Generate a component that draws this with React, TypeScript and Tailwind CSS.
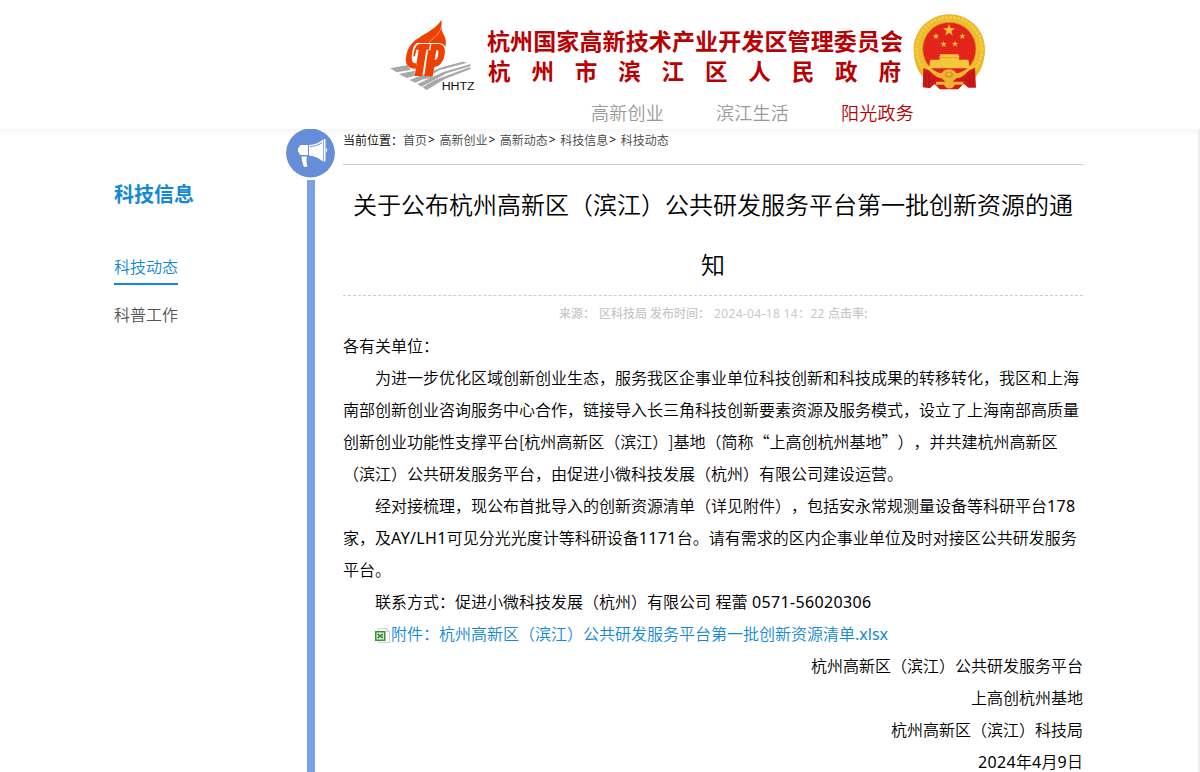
import React from 'react';

const BREADCRUMBS = ['首页', '高新创业', '高新动态', '科技信息', '科技动态'];

const NAV_ITEMS = [
  { label: '高新创业', active: false },
  { label: '滨江生活', active: false },
  { label: '阳光政务', active: true },
];

const DISTRICT_NAME = '杭州市滨江区人民政府';

const STAR = 'M0,-10 L2.4,-3.2 L9.5,-3.1 L3.8,1.2 L5.9,8.1 L0,4 L-5.9,8.1 L-3.8,1.2 L-9.5,-3.1 L-2.4,-3.2 Z';

// Latin letters and digits inside Chinese copy
function Latin({ children }: { children: React.ReactNode }) {
  return <span className="font-['Noto_Sans','Noto_Sans_CJK_SC',sans-serif] font-normal tracking-[0.35px]">{children}</span>;
}

function FlameLogo() {
  return (
    <svg viewBox="0 0 300 270" className="w-[100px] h-[90px] shrink-0">
      <g fill="#a8a8a8">
        <path d="M30 175 L84 165 L92 180 L50 187 Z" />
        <path d="M56 192 L104 182 L104 197 L80 204 Z" />
        <path d="M88 210 L190 170 L248 155 L262 158 L180 180 L158 192 L158 203 L130 208 L106 218 Z" />
        <path d="M112 222 L190 186 L272 162 L270 169 L200 190 L125 230 Z" />
        <path d="M128 232 L165 210 L268 172 L274 176 L196 206 L140 240 Z" />
      </g>
      <path
        fill="#ee4000"
        d="M184 29 C186 46 183 58 189 70 C198 86 199 96 196 112 C193 103 187 100 178 99 L112 99 C102 102 98 117 96 133 C94 148 96 158 104 160 L110 160 L107 176 C85 177 75 164 78 142 C82 115 94 97 115 85 C134 69 170 57 184 29 Z"
      />
      <path fill="#ee4000" d="M117 102 L150 102 L147 119 L139 119 L127 198 L104 198 L116 119 L109 119 L105 139 L100 139 C102 120 107 106 117 102 Z" />
      <path
        fill="#ee4000"
        fillRule="evenodd"
        d="M154 102 L178 102 C192 104 197 116 194 132 C191 153 181 169 163 171 L158 199 L133 199 L144 121 L151 121 Z M169 120 L164 150 C171 149 174 142 175 131 C176 123 174 120 169 120 Z"
      />
      <path d="M185 47 C182 69 164 80 147 97" fill="none" stroke="#fff" strokeWidth="1.5" />
      <text x="185" y="239" fontSize="35" fill="#111" textLength="99" lengthAdjust="spacingAndGlyphs" fontFamily="Liberation Sans, sans-serif">HHTZ</text>
    </svg>
  );
}

function Emblem() {
  return (
    <svg viewBox="30 0 240 285" className="w-20 h-[95px] shrink-0">
      <path
        fill="#e9b52c"
        d="M148 28 C207 28 255 74 255 133 C255 169 242 202 222 222 L205 238 L92 238 L75 222 C53 202 41 171 41 133 C41 74 90 28 148 28 Z"
      />
      <ellipse cx="148" cy="133" rx="98" ry="96" fill="none" stroke="#f4cb3e" strokeWidth="10" strokeDasharray="9 3" />
      <ellipse cx="148" cy="133" rx="86" ry="85" fill="none" stroke="#f0c033" strokeWidth="10" strokeDasharray="6 2" />
      <ellipse cx="148" cy="132" rx="80" ry="80" fill="#e3241b" stroke="#dba51e" strokeWidth="2" />
      <g fill="#f2c433">
        <path transform="translate(147 76) scale(1.9)" d={STAR} />
        <path transform="translate(108 94) scale(1)" d={STAR} />
        <path transform="translate(187 94) scale(1)" d={STAR} />
        <path transform="translate(131 118) scale(1)" d={STAR} />
        <path transform="translate(165 117) scale(1)" d={STAR} />
      </g>
      <path fill="#f5c63b" d="M121 148 L175 148 L179 158 L117 158 Z M119 159 L177 159 L177 164 L205 164 L207 172 L207 182 L215 184 L220 190 L78 190 L83 184 L89 182 L89 172 L91 164 L119 164 Z" />
      <path fill="#d5181a" d="M70 189 L87 196 L103 211 L192 211 L208 196 L225 188 L228 248 L205 248 L191 236 L175 253 L119 253 L104 237 L90 250 L68 247 Z" />
      <path stroke="#941014" strokeWidth="2" fill="none" d="M78 201 L76 247 M88 206 L86 248 M218 200 L220 247 M208 206 L211 247 M103 224 L85 232 M194 224 L213 232" />
      <path fill="#edb52f" d="M95 193 C105 198 115 205 125 205 C133 189 161 189 169 205 C181 204 191 198 201 193 C196 208 187 220 169 220 L158 230 L190 230 L190 239 L164 239 C160 254 137 254 132 239 L108 239 L108 230 L136 230 L125 220 C109 220 101 209 95 193 Z" />
      <ellipse cx="147" cy="209" rx="12" ry="8" fill="#e08a25" />
      <ellipse cx="147" cy="208" rx="7" ry="5" fill="#f4c338" />
    </svg>
  );
}

function Megaphone() {
  return (
    <svg viewBox="0 0 49 49" className="w-[49px] h-[49px] shrink-0">
      <circle cx="24.5" cy="24" r="24.4" fill="#668ed8" />
      <g fill="#fff">
        <path d="M15 16 H22 V26 H15 C13.5 26 13.5 25 13.5 24 L12 23 V19 L13.5 18 C13.5 17 13.5 16 15 16 Z" />
        <path d="M23 16 C29 15.5 33 14 37 10.5 V32.5 C33 29 29 27 23 26.5 Z M24 17 V18 C30 17.6 34 15.5 36 14 V13 C32 15.5 29 17 24 17 Z" fillRule="evenodd" />
        <path d="M37.7 10 H39.5 V32.5 H37.7 Z M40 19 C41.5 19.5 41.5 23 40 23.5 Z" />
        <path d="M15.5 27.5 H21 C20 31 20.5 34 21.5 37.5 L18 38 C16.8 35 15.8 32 15.5 27.5 Z" />
      </g>
    </svg>
  );
}

function ExcelIcon() {
  return (
    <svg viewBox="0 0 16 16" className="inline-block w-4 h-4 align-[-4px]">
      <path d="M3.5 0.5 H11.5 L14.5 3.5 V14.5 H3.5 Z" fill="#fff" stroke="#d0d0d0" />
      <path d="M11.5 0.5 V3.5 H14.5" fill="none" stroke="#d0d0d0" />
      <rect x="0.75" y="3.75" width="9" height="8.5" fill="#e9f3e6" stroke="#3f8f3a" strokeWidth="1.5" />
      <path d="M2.5 6 L8 10 M8 6 L2.5 10" stroke="#3f8f3a" strokeWidth="1.7" />
    </svg>
  );
}

function Header() {
  return (
    <header className="h-[129px] bg-white">
      <div className="h-[95px] flex items-start pl-[380px]">
        <div className="pt-2.5">
          <FlameLogo />
        </div>
        <div className="w-[430px] pl-[7px] pt-[25px] text-[#b90003] font-bold">
          <div className="h-[30px] leading-[30px] text-[23px] tracking-[0.12px] whitespace-nowrap">
            杭州国家高新技术产业开发区管理委员会
          </div>
          <div className="h-[30px] leading-[30px] text-[22.5px] w-[414px] pl-px flex justify-between">
            {DISTRICT_NAME.split('').map((char) => (
              <span key={char}>{char}</span>
            ))}
          </div>
        </div>
        <div className="pt-[5px]">
          <Emblem />
        </div>
      </div>
      <nav className="flex gap-[52px] pl-[591px] pt-0.5 text-lg leading-[30px] tracking-[0.25px] text-[#999] font-[350]">
        {NAV_ITEMS.map((item) => (
          <a key={item.label} className={item.active ? 'text-[#b90003]' : ''}>
            {item.label}
          </a>
        ))}
      </nav>
    </header>
  );
}

function Sidebar() {
  return (
    <aside className="w-[172px] pt-[50px] shrink-0">
      <h2 className="text-xl leading-[30px] font-bold text-[#1288d6]">科技信息</h2>
      <ul className="pt-[42px] text-base font-[350]">
        <li className="w-16 h-[34px] leading-[30px] border-b-2 border-[#1288d6] text-[#1288d6]">科技动态</li>
        <li className="w-16 mt-[13px] leading-8 text-[#555]">科普工作</li>
      </ul>
    </aside>
  );
}

function Article() {
  return (
    <article className="w-[740px] ml-2 shrink-0 font-[350]">
      <div className="h-9 border-b border-[#ccc] flex text-xs leading-[21px] whitespace-nowrap">
        <span className="w-[60px]">当前位置：</span>
        {BREADCRUMBS.map((crumb, i) => (
          <React.Fragment key={crumb}>
            <a className="text-[#444]">{crumb}</a>
            {i < BREADCRUMBS.length - 1 && <span className="w-[12.4px] pl-px font-['Noto_Sans',sans-serif] font-normal">&gt;</span>}
          </React.Fragment>
        ))}
      </div>

      <h1 className="h-[131px] pt-[9px] text-2xl leading-[60px] text-center border-b border-dashed border-[#ccc]">
        关于公布杭州高新区（滨江）公共研发服务平台第一批创新资源的通
        <br />知
      </h1>

      <div className="h-[33px] leading-[33px] flex pl-[216px] text-xs text-[#c8c8c8] whitespace-nowrap font-medium">
        <span className="w-10">来源：</span>
        <span className="w-[51px]">区科技局</span>
        <span className="w-16">发布时间：</span>
        <span className="w-[114px]"><Latin>2024-04-18 14：22</Latin></span>
        <span>点击率:</span>
      </div>

      <div className="text-base whitespace-nowrap *:h-8 *:leading-8">
        <p>各有关单位：</p>
        <p className="pl-8">为进一步优化区域创新创业生态，服务我区企事业单位科技创新和科技成果的转移转化，我区和上海</p>
        <p>南部创新创业咨询服务中心合作，链接导入长三角科技创新要素资源及服务模式，设立了上海南部高质量</p>
        <p>创新创业功能性支撑平台[杭州高新区（滨江）]基地（简称“上高创杭州基地”），并共建杭州高新区</p>
        <p>（滨江）公共研发服务平台，由促进小微科技发展（杭州）有限公司建设运营。</p>
        <p className="pl-8">经对接梳理，现公布首批导入的创新资源清单（详见附件），包括安永常规测量设备等科研平台<Latin>178</Latin></p>
        <p>家，及<Latin>AY/LH1</Latin>可见分光光度计等科研设备<Latin>1171</Latin>台。请有需求的区内企事业单位及时对接区公共研发服务</p>
        <p>平台。</p>
        <p className="pl-8">联系方式：促进小微科技发展（杭州）有限公司<Latin> </Latin>程蕾<Latin> 0571-56020306</Latin></p>
        <p className="pl-8 text-[#1288d6]">
          <ExcelIcon />附件：杭州高新区（滨江）公共研发服务平台第一批创新资源清单<span className="font-['Noto_Sans',sans-serif] font-normal">.xlsx</span>
        </p>
        <p className="text-right">杭州高新区（滨江）公共研发服务平台</p>
        <p className="text-right">上高创杭州基地</p>
        <p className="text-right">杭州高新区（滨江）科技局</p>
        <p className="text-right"><Latin>2024</Latin>年<Latin>4</Latin>月<Latin>9</Latin>日</p>
      </div>
    </article>
  );
}

export default function App() {
  return (
    <div lang="zh-CN" className="w-[1200px] h-[772px] overflow-hidden flex flex-col bg-white text-black font-['Noto_Sans_CJK_SC',sans-serif] [text-spacing-trim:space-all]">
      <Header />
      <main className="flex-1 min-h-0 flex pl-[114px] bg-[linear-gradient(to_bottom,#f6f6f6,#fff_7px)]">
        <Sidebar />
        <div className="w-[49px] flex flex-col items-center shrink-0">
          <Megaphone />
          <div className="flex-1 w-2 mt-0.5 bg-[#7aa0e5]" />
        </div>
        <Article />
        <div className="w-0.5 ml-auto bg-[#efedea]" />
      </main>
    </div>
  );
}
